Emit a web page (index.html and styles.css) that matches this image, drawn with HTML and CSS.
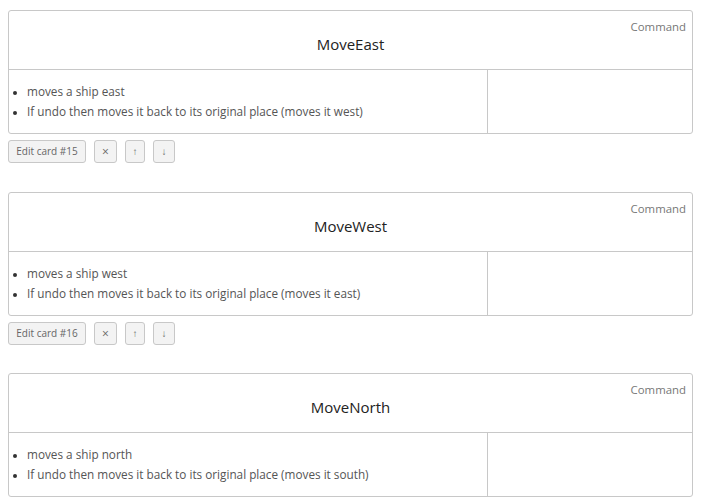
FILE: index.html
```html
<!DOCTYPE html>
<html>
<head>
<meta charset="utf-8">
<link rel="stylesheet" href="styles.css">
</head>
<body>
<div class="cards">
  <div class="entry">
    <div class="card">
      <div class="card-head">
        <div class="kind">Command</div>
        <div class="title">MoveEast</div>
      </div>
      <div class="card-body">
        <div class="col-main">
          <ul class="points">
            <li>moves a ship east</li>
            <li>If undo then moves it back to its original place (moves it west)</li>
          </ul>
        </div>
        <div class="col-side"></div>
      </div>
    </div>
    <div class="actions">
      <button class="btn btn-edit">Edit card #15</button>
      <button class="btn btn-x">×</button>
      <button class="btn btn-up">↑</button>
      <button class="btn btn-down">↓</button>
    </div>
  </div>

  <div class="entry">
    <div class="card">
      <div class="card-head">
        <div class="kind">Command</div>
        <div class="title">MoveWest</div>
      </div>
      <div class="card-body">
        <div class="col-main">
          <ul class="points">
            <li>moves a ship west</li>
            <li>If undo then moves it back to its original place (moves it east)</li>
          </ul>
        </div>
        <div class="col-side"></div>
      </div>
    </div>
    <div class="actions">
      <button class="btn btn-edit">Edit card #16</button>
      <button class="btn btn-x">×</button>
      <button class="btn btn-up">↑</button>
      <button class="btn btn-down">↓</button>
    </div>
  </div>

  <div class="entry">
    <div class="card">
      <div class="card-head">
        <div class="kind">Command</div>
        <div class="title">MoveNorth</div>
      </div>
      <div class="card-body">
        <div class="col-main">
          <ul class="points">
            <li>moves a ship north</li>
            <li>If undo then moves it back to its original place (moves it south)</li>
          </ul>
        </div>
        <div class="col-side"></div>
      </div>
    </div>
  </div>
</div>
</body>
</html>
```

FILE: styles.css
```css
html, body {
  margin: 0;
  padding: 0;
  background: #ffffff;
}

body {
  padding: 10px 8px 0 8px;
  font-family: "Open Sans", "Noto Sans", "Liberation Sans", sans-serif;
  color: #333;
}

.cards {
  display: flex;
  flex-direction: column;
}

.entry {
  margin-bottom: 28.5px;
}

.card {
  border: 1px solid #c8c8c8;
  border-radius: 3px;
  width: 685px;
  box-sizing: border-box;
}

.card-head {
  padding: 8px 6px 16px 6px;
  border-bottom: 1px solid #c8c8c8;
}

.kind {
  text-align: right;
  font-size: 11.4px;
  line-height: 16px;
  color: #777;
}

.title {
  text-align: center;
  font-size: 15px;
  line-height: 18px;
  color: #222;
}

.card-body {
  display: flex;
  height: 63px;
}

.col-main {
  width: 479px;
  border-right: 1px solid #c8c8c8;
  box-sizing: border-box;
}

.col-side {
  flex: 1;
}

.points {
  margin: 0;
  padding: 11px 0 0 18px;
  font-size: 11.75px;
  line-height: 20px;
  color: #555;
}

.points li::marker {
  color: #333;
  font-size: 10px;
}

.actions {
  display: flex;
  gap: 8px;
  margin-top: 6px;
}

.btn {
  height: 23px;
  padding: 0 6px;
  border: 1px solid #c8c8c8;
  border-radius: 3px;
  background: #f3f3f3;
  color: #666;
  font-family: "Open Sans", "Noto Sans", "Liberation Sans", sans-serif;
  font-size: 10px;
  line-height: 21px;
  box-sizing: border-box;
  white-space: nowrap;
}

.btn-edit {
  width: 78px;
}

.btn-x {
  width: 23px;
  padding: 0;
  font-size: 12px;
}

.btn-up {
  width: 20px;
  padding: 0;
  font-size: 10px;
}

.btn-down {
  width: 22px;
  padding: 0;
  font-size: 10px;
}
```
